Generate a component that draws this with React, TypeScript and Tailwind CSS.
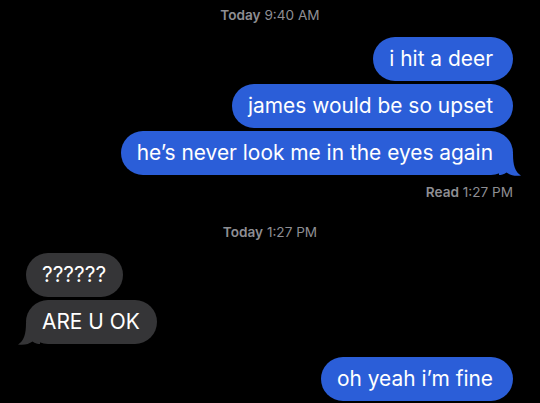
import React from "react";

const font = { fontFamily: "Inter, 'Noto Sans', sans-serif" };

function TailRight({ color }: { color: string }) {
  return (
    <svg
      className="absolute bottom-[-1px] right-[-8px]"
      width="22"
      height="22"
      viewBox="0 0 22 22"
    >
      <path
        d="M0 0 H14 C14 11 16 18 22 21.5 C16 22.5 11 21 7.5 18.5 C5 20.5 2 21 0 21 Z"
        fill={color}
      />
    </svg>
  );
}

function TailLeft({ color }: { color: string }) {
  return (
    <svg
      className="absolute bottom-[-1px] left-[-8px] -scale-x-100"
      width="22"
      height="22"
      viewBox="0 0 22 22"
    >
      <path
        d="M0 0 H14 C14 11 16 18 22 21.5 C16 22.5 11 21 7.5 18.5 C5 20.5 2 21 0 21 Z"
        fill={color}
      />
    </svg>
  );
}

const BLUE = "#2b5ed8";
const GRAY = "#353537";

function Sent({ text, tail }: { text: string; tail?: boolean }) {
  return (
    <div className="relative shrink-0 h-[44px] rounded-[22px] bg-[#2b5ed8] pl-[16px] pr-[20px] flex items-center text-white text-[20.9px] leading-none whitespace-nowrap">
      {tail && <TailRight color={BLUE} />}
      <span className="relative">{text}</span>
    </div>
  );
}

function Received({ text, tail }: { text: string; tail?: boolean }) {
  return (
    <div className="relative shrink-0 h-[44px] rounded-[22px] bg-[#353537] pl-[16px] pr-[17px] flex items-center text-white text-[20.9px] leading-none whitespace-nowrap">
      {tail && <TailLeft color={GRAY} />}
      <span className="relative">{text}</span>
    </div>
  );
}

export default function App() {
  return (
    <div
      className="w-[540px] h-[403px] bg-black overflow-hidden flex flex-col"
      style={font}
    >
      <div className="shrink-0 pt-[7px] h-[37px] text-center text-[13.6px] leading-[16px] text-[#8e8e93]">
        <span className="font-semibold">Today</span> 9:40 AM
      </div>
      <div className="shrink-0 flex flex-col items-end gap-[3px] pr-[27px]">
        <Sent text="i hit a deer" />
        <Sent text="james would be so upset" />
        <Sent text="he’s never look me in the eyes again" tail />
      </div>
      <div className="shrink-0 pr-[27px] pt-[9px] text-right text-[13.6px] leading-[16px] text-[#8e8e93]">
        <span className="font-semibold">Read</span> 1:27 PM
      </div>
      <div className="shrink-0 pt-[24px] h-[53px] text-center text-[13.6px] leading-[16px] text-[#8e8e93]">
        <span className="font-semibold">Today</span> 1:27 PM
      </div>
      <div className="shrink-0 flex flex-col items-start gap-[3px] pl-[26px]">
        <Received text="??????" />
        <Received text="ARE U OK" tail />
      </div>
      <div className="shrink-0 flex flex-col items-end pr-[27px] pt-[13px]">
        <div className="h-[45px] flex">
          <Sent text="oh yeah i’m fine" />
        </div>
      </div>
    </div>
  );
}
